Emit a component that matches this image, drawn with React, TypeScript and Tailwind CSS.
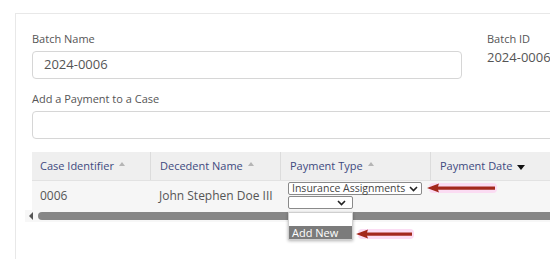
import React from 'react';

function SortUp() {
  return <span className="ml-[5px] inline-block w-0 h-0 border-l-[3px] border-r-[3px] border-b-[4px] border-l-transparent border-r-transparent border-b-[#b5b5b5] -mt-[5px]" />;
}

function SortDown() {
  return <span className="ml-[5px] inline-block w-0 h-0 border-l-[4px] border-r-[4px] border-t-[5px] border-l-transparent border-r-transparent border-t-[#111] mt-[3px]" />;
}

function Chevron() {
  return (
    <svg width="9" height="6" viewBox="0 0 9 6" className="shrink-0">
      <path d="M1 1l3.5 3.5L8 1" fill="none" stroke="#222" strokeWidth="1.6" />
    </svg>
  );
}

function RedArrow({ width }: { width: number }) {
  return (
    <div className="relative h-[10px] flex items-center" style={{ width }}>
      <div className="absolute inset-y-0 left-[2px] right-0 bg-[#fbdcf3] rounded-sm" />
      <svg width={width} height="10" viewBox={`0 0 ${width} 10`} className="relative">
        <path d={`M0 5 L12 0.5 L11 3.5 L${width - 2} 3.5 L${width - 2} 6.8 L11 6.8 L12 9.5 Z`} fill="#a3281c" />
      </svg>
    </div>
  );
}

export default function App() {
  const headers = [
    { label: 'Case Identifier', w: 'w-[118px]', icon: <SortUp /> },
    { label: 'Decedent Name', w: 'w-[130px]', icon: <SortUp /> },
    { label: 'Payment Type', w: 'w-[150px]', icon: <SortUp /> },
    { label: 'Payment Date', w: 'w-[160px]', icon: <SortDown /> },
  ];

  return (
    <div className="w-[550px] h-[259px] overflow-hidden bg-white pt-[13px] pl-[15px] font-['Open_Sans',sans-serif] text-[#555]">
      <div className="w-[620px] h-[300px] border border-[#e8e8e8] pl-[16px] pt-[16px]">
        {/* batch name / id */}
        <div className="flex">
          <div className="w-[430px]">
            <div className="text-[11px] leading-[18px] text-[#555]">Batch Name</div>
            <div className="mt-[3px] h-[28px] border border-[#d6d6d6] rounded-[4px] flex items-center pl-[11px] text-[13px] text-[#555]">
              2024-0006
            </div>
          </div>
          <div className="ml-[25px]">
            <div className="text-[11px] leading-[18px] text-[#555]">Batch ID</div>
            <div className="text-[13px] leading-[18px] text-[#555]">2024-0006</div>
          </div>
        </div>

        {/* payment case search */}
        <div className="mt-[11px] text-[11px] leading-[18px] text-[#555]">Add a Payment to a Case</div>
        <div className="mt-[3px] h-[28px] border border-[#d6d6d6] rounded-[4px]" />

        {/* table */}
        <div className="mt-[13px]">
          <div className="flex h-[29px] bg-[#efefef] border-b border-[#e2e2e2]">
            {headers.map((h, i) => (
              <div
                key={h.label}
                className={`${h.w} flex items-center pl-[8px] text-[11px] text-[#3e4a80] ${i > 0 ? 'border-l border-[#dcdcdc] pl-[9px]' : ''}`}
              >
                <span>{h.label}</span>
                {h.icon}
              </div>
            ))}
          </div>
          <div className="flex h-[29px] bg-[#f6f6f6] text-[12px] text-[#555]">
            <div className="w-[118px] pl-[8px] flex items-center">0006</div>
            <div className="w-[130px] pl-[9px] flex items-center">John Stephen Doe III</div>
            <div className="w-[150px] pl-[8px] pt-[1px] relative">
              <div className="w-[134px] h-[13px] border border-[#8a8a8a] rounded-[2px] bg-white flex items-center gap-[4px] pl-[3px] text-[10.5px] leading-none text-[#444] whitespace-nowrap">
                <span>Insurance Assignments</span>
                <Chevron />
              </div>
              <div className="mt-[1px] w-[65px] h-[13px] border border-[#8a8a8a] rounded-[2px] bg-white flex items-center justify-end pr-[6px]">
                <Chevron />
              </div>
              {/* open option list */}
              <div className="absolute left-[8px] top-[31px] w-[65px] bg-white border border-[#cfcfcf] shadow-[0_1px_3px_rgba(0,0,0,0.3)] z-10">
                <div className="h-[13px]" />
                <div className="h-[13px] bg-[#7b7b7b] text-white text-[11px] leading-[13px] pl-[3px]">Add New</div>
              </div>
              <div className="absolute left-[147px] top-[2px] z-10">
                <RedArrow width={70} />
              </div>
              <div className="absolute left-[76px] top-[48px] z-10">
                <RedArrow width={58} />
              </div>
            </div>
          </div>
          {/* horizontal scrollbar */}
          <div className="flex items-center h-[12px] -ml-[7px] bg-[#f7f7f7]">
            <span className="ml-[4px] w-0 h-0 border-t-[4px] border-b-[4px] border-r-[4px] border-t-transparent border-b-transparent border-r-[#555]" />
            <div className="ml-[5px] h-[8px] flex-1 rounded-full bg-[#878787]" />
          </div>
        </div>
      </div>
    </div>
  );
}
